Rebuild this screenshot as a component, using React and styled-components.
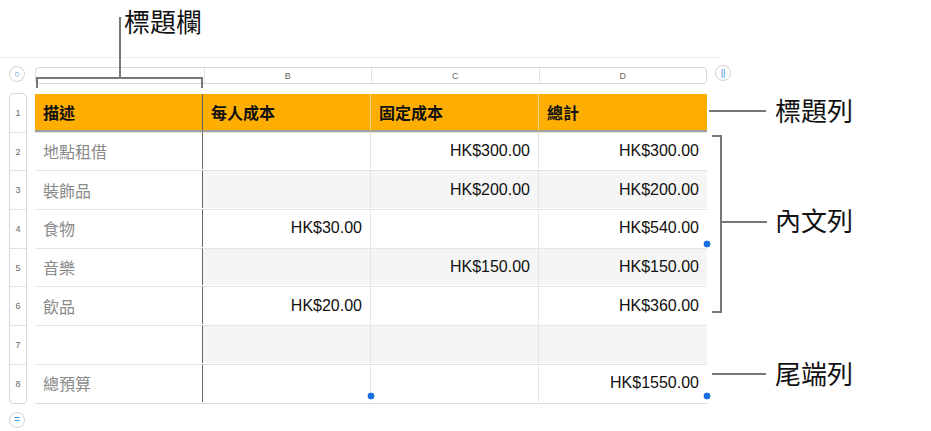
import React from "react";
import styled, { createGlobalStyle } from "styled-components";

const G = createGlobalStyle`
  body{margin:0;background:#fff;font-family:"Liberation Sans","Noto Sans CJK TC",sans-serif;}
`;
const Stage = styled.div`position:relative;width:931px;height:431px;overflow:hidden;`;
const TopRule = styled.div`position:absolute;left:0;top:57px;width:720px;height:1px;background:#ececec;`;
const Sheet = styled.div`position:absolute;left:9px;top:66px;display:grid;grid-template-columns:18px 672px;column-gap:8px;row-gap:10px;`;
const CircleBtn = styled.div`width:16px;height:16px;border:1px solid #d4d4d4;border-radius:50%;display:flex;align-items:center;justify-content:center;color:#3a8ee6;font-size:9px;box-sizing:border-box;margin-top:${p=>p.mt||0}px;`;
const ColHead = styled.div`height:15px;border:1px solid #d8d8d8;border-radius:4px;display:grid;grid-template-columns:repeat(4,1fr);font-size:9px;color:#666;margin-top:1px;`;
const ColLetter = styled.div`display:flex;align-items:center;justify-content:center;border-left:${p=>p.first?"none":"1px solid #e2e2e2"};`;
const RowNums = styled.div`border:1px solid #d8d8d8;border-radius:4px;display:flex;flex-direction:column;margin-top:-1px;`;
const RowNum = styled.div`height:37.7px;display:flex;align-items:center;justify-content:center;font-size:9px;color:#666;border-top:${p=>p.first?"none":"1px solid #e2e2e2"};`;
const Table = styled.div`display:grid;grid-template-columns:repeat(4,168px);border-bottom:1px solid #dcdcdc;position:relative;`;
const Cell = styled.div`height:37.7px;box-sizing:border-box;display:flex;align-items:center;padding:0 8px;font-size:16px;
  justify-content:${p=>p.right?"flex-end":"flex-start"};
  background:${p=>p.head?"#fdae00":p.alt?"#f5f5f5":"#fff"};
  color:${p=>p.head?"#111":p.gray?"#8a8a8a":"#111"};
  font-weight:${p=>p.head?"bold":"normal"};
  border-top:${p=>p.head?"none":"1px solid #e4e4e4"};
  border-bottom:${p=>p.head?"2px solid #a0a0a0":"none"};
  border-right:${p=>p.a?"1px solid #666":p.last?"none":"1px solid "+(p.head?"#f7d27a":"#e4e4e4")};
  margin-bottom:${p=>p.head?"-1px":"0"};`;
const Dot = styled.div`position:absolute;width:7px;height:7px;border-radius:50%;background:#1a6fe0;border:1px solid #fff;transform:translate(-50%,-50%);left:${p=>p.x}px;top:${p=>p.y}px;`;
const Label = styled.div`position:absolute;left:${p=>p.x}px;top:${p=>p.y}px;font-size:26px;color:#111;font-family:"Noto Sans CJK TC",sans-serif;line-height:1;`;
const Line = styled.div`position:absolute;background:#777;left:${p=>p.x}px;top:${p=>p.y}px;width:${p=>p.w}px;height:${p=>p.h}px;`;

const rows = [
  ["地點租借","","HK$300.00","HK$300.00"],
  ["裝飾品","","HK$200.00","HK$200.00"],
  ["食物","HK$30.00","","HK$540.00"],
  ["音樂","","HK$150.00","HK$150.00"],
  ["飲品","HK$20.00","","HK$360.00"],
  ["","","",""],
  ["總預算","","","HK$1550.00"],
];

export default function App(){
  return <Stage><G/>
    <TopRule/>
    <Sheet>
      <CircleBtn>○</CircleBtn>
      <ColHead>{["","B","C","D"].map((c,i)=><ColLetter key={i} first={i===0}>{c}</ColLetter>)}</ColHead>
      <RowNums>{[1,2,3,4,5,6,7,8].map(n=><RowNum key={n} first={n===1}>{n}</RowNum>)}</RowNums>
      <Table>
        {["描述","每人成本","固定成本","總計"].map((h,i)=><Cell key={h} head a={i===0} last={i===3}>{h}</Cell>)}
        {rows.map((r,ri)=>r.map((v,ci)=><Cell key={ri+"-"+ci} a={ci===0} last={ci===3} gray={ci===0} right={ci>0} alt={ri%2===1&&ci>0}>{v}</Cell>))}
        <Dot x={336} y={302}/>
        <Dot x={672} y={150}/>
        <Dot x={672} y={302}/>
      </Table>
      <CircleBtn mt={-2} style={{fontSize:"10px"}}>=</CircleBtn>
    </Sheet>
    <CircleBtn style={{position:"absolute",left:715,top:65,fontSize:"9px"}}>||</CircleBtn>
    <Label x={124} y={8}>標題欄</Label>
    <Line x={119} y={17} w={2} h={61}/>
    <Line x={36} y={77} w={167} h={2}/>
    <Line x={36} y={77} w={2} h={11}/>
    <Line x={201} y={77} w={2} h={11}/>
    <Label x={775} y={97}>標題列</Label>
    <Line x={709} y={110} w={57} h={2}/>
    <Line x={720} y={135} w={2} h={178}/>
    <Line x={712} y={135} w={10} h={2}/>
    <Line x={712} y={311} w={10} h={2}/>
    <Line x={722} y={221} w={45} h={2}/>
    <Label x={775} y={207}>內文列</Label>
    <Line x={712} y={373} w={54} h={2}/>
    <Label x={775} y={360}>尾端列</Label>
  </Stage>;
}
